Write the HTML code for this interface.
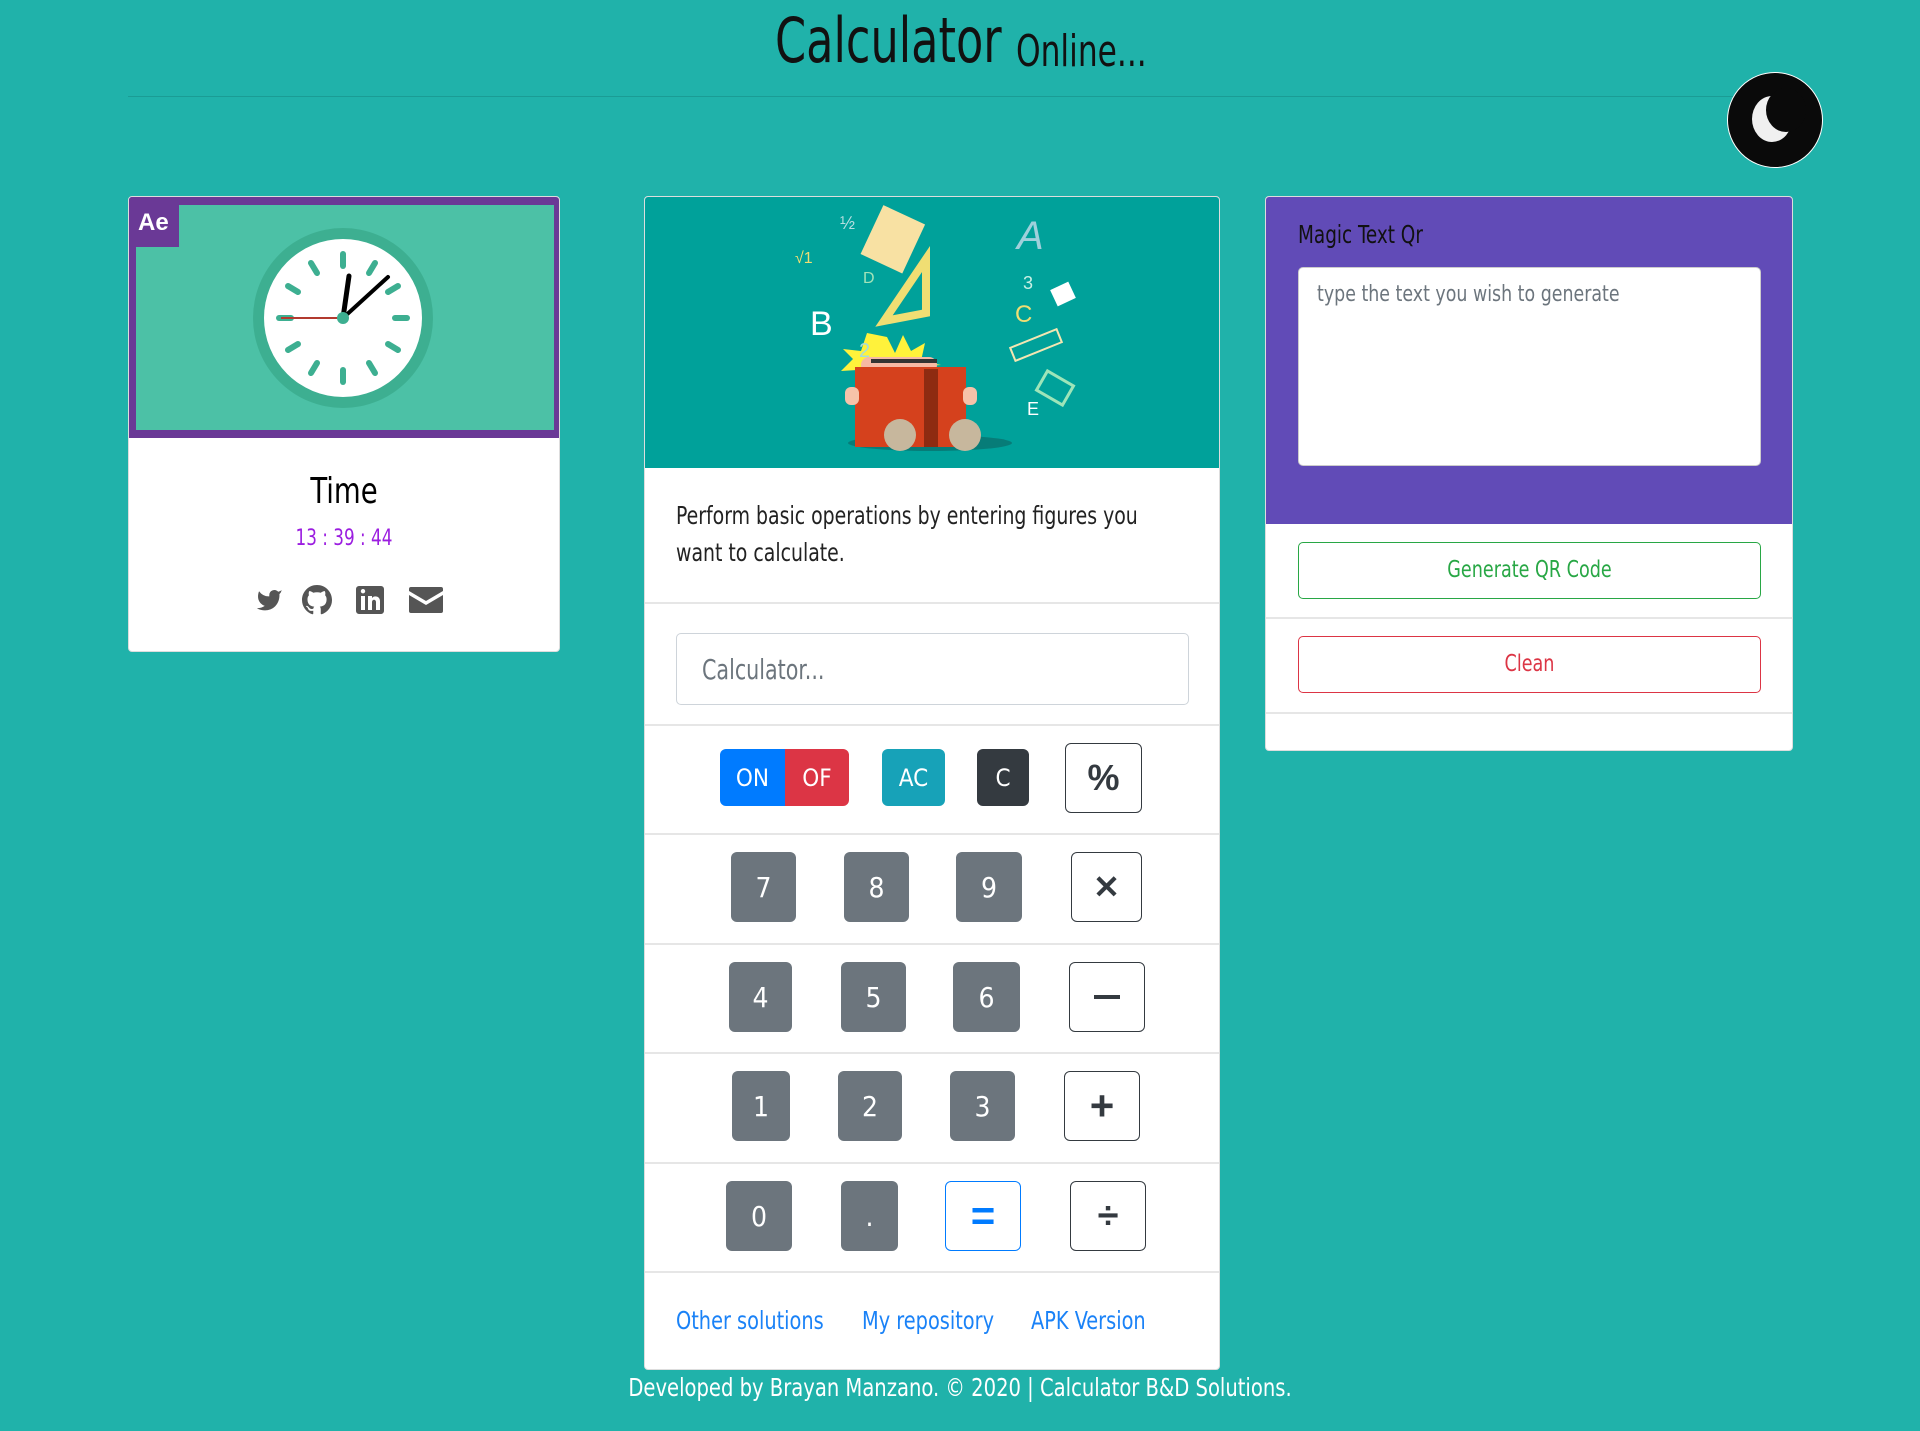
<!DOCTYPE html>
<html><head><meta charset="utf-8"><style>
*{box-sizing:border-box;margin:0;padding:0}
body{width:1920px;height:1431px;background:#20b2aa;font-family:"Liberation Sans Narrow","DejaVu Sans Condensed","Liberation Sans",sans-serif;position:relative;overflow:hidden;color:#212529}
.a{position:absolute}
.sx{transform:scaleX(.82);transform-origin:left center;white-space:nowrap}
.sc{transform:scaleX(.85);transform-origin:center center;white-space:nowrap}
.card{position:absolute;background:#fff;border:1px solid #ddd;border-radius:4px;overflow:hidden}
.hr{position:absolute;left:0;right:0;height:2px;background:#e6e6e6}
.b{position:absolute;border-radius:6px;color:#fff;display:flex;align-items:center;justify-content:center;font-size:28px}
.g{background:#6c757d}
.o{background:#fff;border:1.5px solid #343a40;color:#343a40}
.lk{position:absolute;top:1306px;color:#1a82f7;font-size:25px;transform:scaleX(.86)}
</style></head><body>
<div class="a sx" style="left:775px;top:4px;font-size:62px;color:#111;transform:scaleX(.8)">Calculator</div>
<div class="a sx" style="left:1016px;top:26px;font-size:44px;color:#111;transform:scaleX(.79)">Online...</div>
<div class="a" style="left:128px;top:96px;width:1620px;height:1px;background:#1a9c95"></div>
<div class="a" style="left:1727px;top:72px;width:96px;height:96px;border-radius:50%;background:#0a0a0a;border:1px solid #fff"></div>
<div class="a" style="left:1752px;top:96px;width:40px;height:46px;border-radius:50%;background:#f0f0f0"></div>
<div class="a" style="left:1766px;top:88px;width:40px;height:44px;border-radius:50%;background:#0a0a0a"></div>

<!-- left card -->
<div class="card" style="left:128px;top:196px;width:432px;height:456px">
 <div class="a" style="left:0;top:0;width:432px;height:241px;background:#6a3996"></div>
 <div class="a" style="left:7px;top:8px;width:418px;height:225px;background:#4cc1a6"></div>
 <div class="a" style="left:0;top:0;width:50px;height:50px;background:#6a3996;color:#fff;font:bold 24px 'Liberation Sans',sans-serif;padding:12px 0 0 9px">Ae</div>
 <svg class="a" style="left:124px;top:31px" width="180" height="180" viewBox="-90 -90 180 180">
  <circle r="90" fill="#3daf91"/><circle r="79" fill="#fff"/>
  <g stroke="#3daf91" stroke-width="6" stroke-linecap="round">
   <line x1="0" y1="-64" x2="0" y2="-52"/><line x1="0" y1="64" x2="0" y2="52"/><line x1="-64" y1="0" x2="-52" y2="0"/><line x1="64" y1="0" x2="52" y2="0"/>
   <line x1="32" y1="-55" x2="26" y2="-45"/><line x1="55" y1="-32" x2="45" y2="-26"/><line x1="55" y1="32" x2="45" y2="26"/><line x1="32" y1="55" x2="26" y2="45"/>
   <line x1="-32" y1="-55" x2="-26" y2="-45"/><line x1="-55" y1="-32" x2="-45" y2="-26"/><line x1="-55" y1="32" x2="-45" y2="26"/><line x1="-32" y1="55" x2="-26" y2="45"/>
  </g>
  <line x1="0" y1="0" x2="-62" y2="0" stroke="#b23a2f" stroke-width="2"/>
  <line x1="0" y1="0" x2="6" y2="-42" stroke="#000" stroke-width="5" stroke-linecap="round"/>
  <line x1="0" y1="0" x2="45" y2="-41" stroke="#000" stroke-width="4" stroke-linecap="round"/>
  <circle r="6" fill="#3daf91"/>
 </svg>
 <div class="a sc" style="left:0;right:0;top:274px;text-align:center;font-size:36px;color:#000">Time</div>
 <div class="a sc" style="left:0;right:0;top:329px;text-align:center;font-size:22px;color:#9b1de0">13 : 39 : 44</div>
 <svg class="a" style="left:120px;top:387px" width="40" height="32" viewBox="0 0 24 24" fill="#555"><path d="M23 3a10.9 10.9 0 0 1-3.14 1.53 4.48 4.48 0 0 0-7.86 3v1A10.66 10.66 0 0 1 3 4s-4 9 5 13a11.640 11.640 0 0 1-7 2c9 5 20 0 20-11.5a4.5 4.5 0 0 0-.08-.83A7.72 7.72 0 0 0 23 3z" transform="translate(2,2) scale(.85)"/></svg>
 <svg class="a" style="left:173px;top:388px" width="30" height="30" viewBox="0 0 16 16" fill="#555"><path d="M8 0C3.58 0 0 3.58 0 8c0 3.54 2.29 6.53 5.47 7.59.4.07.55-.17.55-.38 0-.19-.01-.82-.01-1.49-2.01.37-2.53-.49-2.69-.94-.09-.23-.48-.94-.82-1.13-.28-.15-.68-.52-.01-.53.63-.01 1.08.58 1.23.82.72 1.21 1.870.87 2.33.66.07-.52.28-.87.51-1.07-1.78-.2-3.640-.89-3.640-3.950 0-.87.31-1.59.82-2.15-.08-.2-.36-1.02.08-2.12 0 0 .67-.21 2.2.82.64-.18 1.32-.27 2-.27.68 0 1.36.09 2 .27 1.53-1.04 2.2-.82 2.2-.82.44 1.1.16 1.92.08 2.12.51.56.82 1.27.82 2.15 0 3.07-1.87 3.75-3.65 3.95.29.25.54.73.54 1.48 0 1.07-.01 1.93-.01 2.2 0 .21.15.46.55.38A8.01 8.01 0 0 0 16 8c0-4.42-3.58-8-8-8z"/></svg>
 <svg class="a" style="left:226px;top:388px" width="30" height="30" viewBox="0 0 30 30" fill="#555"><path d="M4 1h22a3 3 0 0 1 3 3v22a3 3 0 0 1-3 3h-22a3 3 0 0 1-3-3v-22a3 3 0 0 1 3-3zm2 10v14h4v-14zm2-7a2.2 2.2 0 1 0 0 4.4 2.2 2.2 0 1 0 0-4.4zm5 7v14h4v-8c0-3 4-3 4 0v8h4v-9c0-5-6-6-8-3v-2z"/></svg>
 <svg class="a" style="left:280px;top:390px" width="34" height="26" viewBox="0 0 34 26" fill="#555"><path d="M2 0h30a2 2 0 0 1 2 2v2l-17 10-17-10v-2a2 2 0 0 1 2-2zm-2 8l17 10 17-10v16a2 2 0 0 1-2 2h-30a2 2 0 0 1-2-2z"/></svg>
</div>

<!-- middle card -->
<div class="card" style="left:644px;top:196px;width:576px;height:1174px">
 <svg class="a" style="left:0;top:0" width="576" height="271" viewBox="0 0 576 271">
  <rect width="576" height="271" fill="#00a19a"/>
  <ellipse cx="285" cy="246" rx="82" ry="8" fill="#077c78"/>
  <g transform="rotate(25 250 40)"><rect x="226" y="16" width="46" height="54" fill="#f8e1a3"/></g>
  <path d="M281 62l-42 62 42 -8z" fill="none" stroke="#f0de73" stroke-width="8"/>
  <path d="M242 140l8 16 8-18 8 16 14-8-4 18 20 4-100 6 12-12-10-10 18 2 6-18z" fill="#fff23b"/>
  <rect x="216" y="160" width="76" height="16" rx="8" fill="#f6b9a4"/>
  <rect x="226" y="162" width="66" height="4" fill="#333"/>
  <path d="M210 170h56v80h-56z" fill="#d5411d"/><path d="M265 170h56v80h-56z" fill="#d5411d"/>
  <rect x="279" y="172" width="14" height="78" fill="#8e2b11"/>
  <rect x="200" y="190" width="14" height="18" rx="6" fill="#f6c2a9"/><rect x="318" y="190" width="14" height="18" rx="6" fill="#f6c2a9"/>
  <ellipse cx="255" cy="238" rx="16" ry="16" fill="#c7b79d"/><ellipse cx="320" cy="238" rx="16" ry="16" fill="#c7b79d"/>
  <g font-family="Liberation Sans,sans-serif">
   <text x="165" y="138" font-size="34" fill="#fff">B</text>
   <text x="372" y="52" font-size="40" fill="#9fd0db" font-style="italic">A</text>
   <text x="370" y="125" font-size="24" fill="#f0de73">C</text>
   <text x="378" y="92" font-size="18" fill="#c9f0e4">3</text>
   <text x="214" y="160" font-size="20" fill="#a7ddd8">2</text>
   <text x="150" y="66" font-size="16" fill="#f0de73">√1</text>
   <text x="218" y="86" font-size="16" fill="#a2e3b9">D</text>
   <text x="195" y="32" font-size="18" fill="#b6dfe0">½</text>
   <text x="382" y="218" font-size="18" fill="#fff">E</text>
  </g>
  <rect x="408" y="88" width="20" height="18" fill="#fff" transform="rotate(-25 418 97)"/>
  <rect x="366" y="141" width="50" height="14" fill="none" stroke="#f3e6b2" stroke-width="2" transform="rotate(-22 391 148)"/>
  <rect x="395" y="180" width="30" height="22" fill="none" stroke="#9ee5b9" stroke-width="3" transform="rotate(30 410 191)"/>
 </svg>
 <div class="a" style="left:31px;top:300px;font-size:25px;line-height:37px;color:#222;width:610px;transform:scaleX(.84);transform-origin:left top">Perform basic operations by entering figures you<br>want to calculate.</div>
 <div class="hr" style="top:405px"></div>
 <div class="a" style="left:31px;top:436px;width:513px;height:72px;border:1px solid #ced4da;border-radius:5px;font-size:28px;color:#6c757d;padding:19px 0 0 25px"><div class="sx">Calculator...</div></div>
 <div class="hr" style="top:527px"></div>
 <div class="hr" style="top:636px"></div>
 <div class="hr" style="top:746px"></div>
 <div class="hr" style="top:855px"></div>
 <div class="hr" style="top:965px"></div>
 <div class="hr" style="top:1074px"></div>
</div>
<div class="b" style="left:720px;top:749px;width:65px;height:57px;background:#007bff;border-radius:6px 0 0 6px;font-size:24px">ON</div>
<div class="b" style="left:785px;top:749px;width:64px;height:57px;background:#dc3545;border-radius:0 6px 6px 0;font-size:24px">OF</div>
<div class="b" style="left:882px;top:749px;width:63px;height:57px;background:#17a2b8;font-size:24px">AC</div>
<div class="b" style="left:977px;top:749px;width:52px;height:57px;background:#343a40;font-size:24px">C</div>
<div class="b o" style="left:1065px;top:743px;width:77px;height:70px;font:bold 36px 'Liberation Sans',sans-serif">%</div>
<div class="b g" style="left:731px;top:852px;width:65px;height:70px">7</div>
<div class="b g" style="left:844px;top:852px;width:65px;height:70px">8</div>
<div class="b g" style="left:956px;top:852px;width:66px;height:70px">9</div>
<div class="b o" style="left:1071px;top:852px;width:71px;height:70px;font:bold 32px 'Liberation Sans',sans-serif">✕</div>
<div class="b g" style="left:729px;top:962px;width:63px;height:70px">4</div>
<div class="b g" style="left:841px;top:962px;width:65px;height:70px">5</div>
<div class="b g" style="left:953px;top:962px;width:67px;height:70px">6</div>
<div class="b o" style="left:1069px;top:962px;width:76px;height:70px"><div style="width:26px;height:4px;background:#343a40"></div></div>
<div class="b g" style="left:732px;top:1071px;width:58px;height:70px">1</div>
<div class="b g" style="left:838px;top:1071px;width:64px;height:70px">2</div>
<div class="b g" style="left:950px;top:1071px;width:65px;height:70px">3</div>
<div class="b o" style="left:1064px;top:1071px;width:76px;height:70px;font:bold 42px 'Liberation Sans',sans-serif">+</div>
<div class="b g" style="left:726px;top:1181px;width:66px;height:70px">0</div>
<div class="b g" style="left:841px;top:1181px;width:57px;height:70px">.</div>
<div class="b" style="left:945px;top:1181px;width:76px;height:70px;background:#fff;border:1.5px solid #007bff;color:#007bff;font:bold 42px 'Liberation Sans',sans-serif">=</div>
<div class="b o" style="left:1070px;top:1181px;width:76px;height:70px;font:bold 38px 'Liberation Sans',sans-serif">÷</div>
<div class="lk sx" style="left:676px;transform:scaleX(.86)">Other solutions</div>
<div class="lk sx" style="left:862px;transform:scaleX(.86)">My repository</div>
<div class="lk sx" style="left:1031px;transform:scaleX(.86)">APK Version</div>

<!-- right card -->
<div class="card" style="left:1265px;top:196px;width:528px;height:555px">
 <div class="a" style="left:0;top:0;width:528px;height:327px;background:#614bb7"></div>
 <div class="a sx" style="left:32px;top:23px;font-size:25px;color:#111">Magic Text Qr</div>
 <div class="a" style="left:32px;top:70px;width:463px;height:199px;background:#fff;border:1px solid #ccc;border-radius:5px;font-size:22px;color:#6c757d;padding:14px 0 0 18px"><div class="sx" style="transform:scaleX(.88)">type the text you wish to generate</div></div>
 <div class="a" style="left:32px;top:345px;width:463px;height:57px;border:1.5px solid #28a745;border-radius:5px;color:#28a745;font-size:23px;text-align:center;line-height:54px"><div class="sc">Generate QR Code</div></div>
 <div class="hr" style="top:420px"></div>
 <div class="a" style="left:32px;top:439px;width:463px;height:57px;border:1.5px solid #dc3545;border-radius:5px;color:#dc3545;font-size:23px;text-align:center;line-height:54px"><div class="sc">Clean</div></div>
 <div class="hr" style="top:515px"></div>
</div>

<div class="a sc" style="left:0;right:0;top:1373px;text-align:center;color:#fff;font-size:25px;transform:scaleX(.87)">Developed by Brayan Manzano. © 2020 | Calculator B&amp;D Solutions.</div>
</body></html>
